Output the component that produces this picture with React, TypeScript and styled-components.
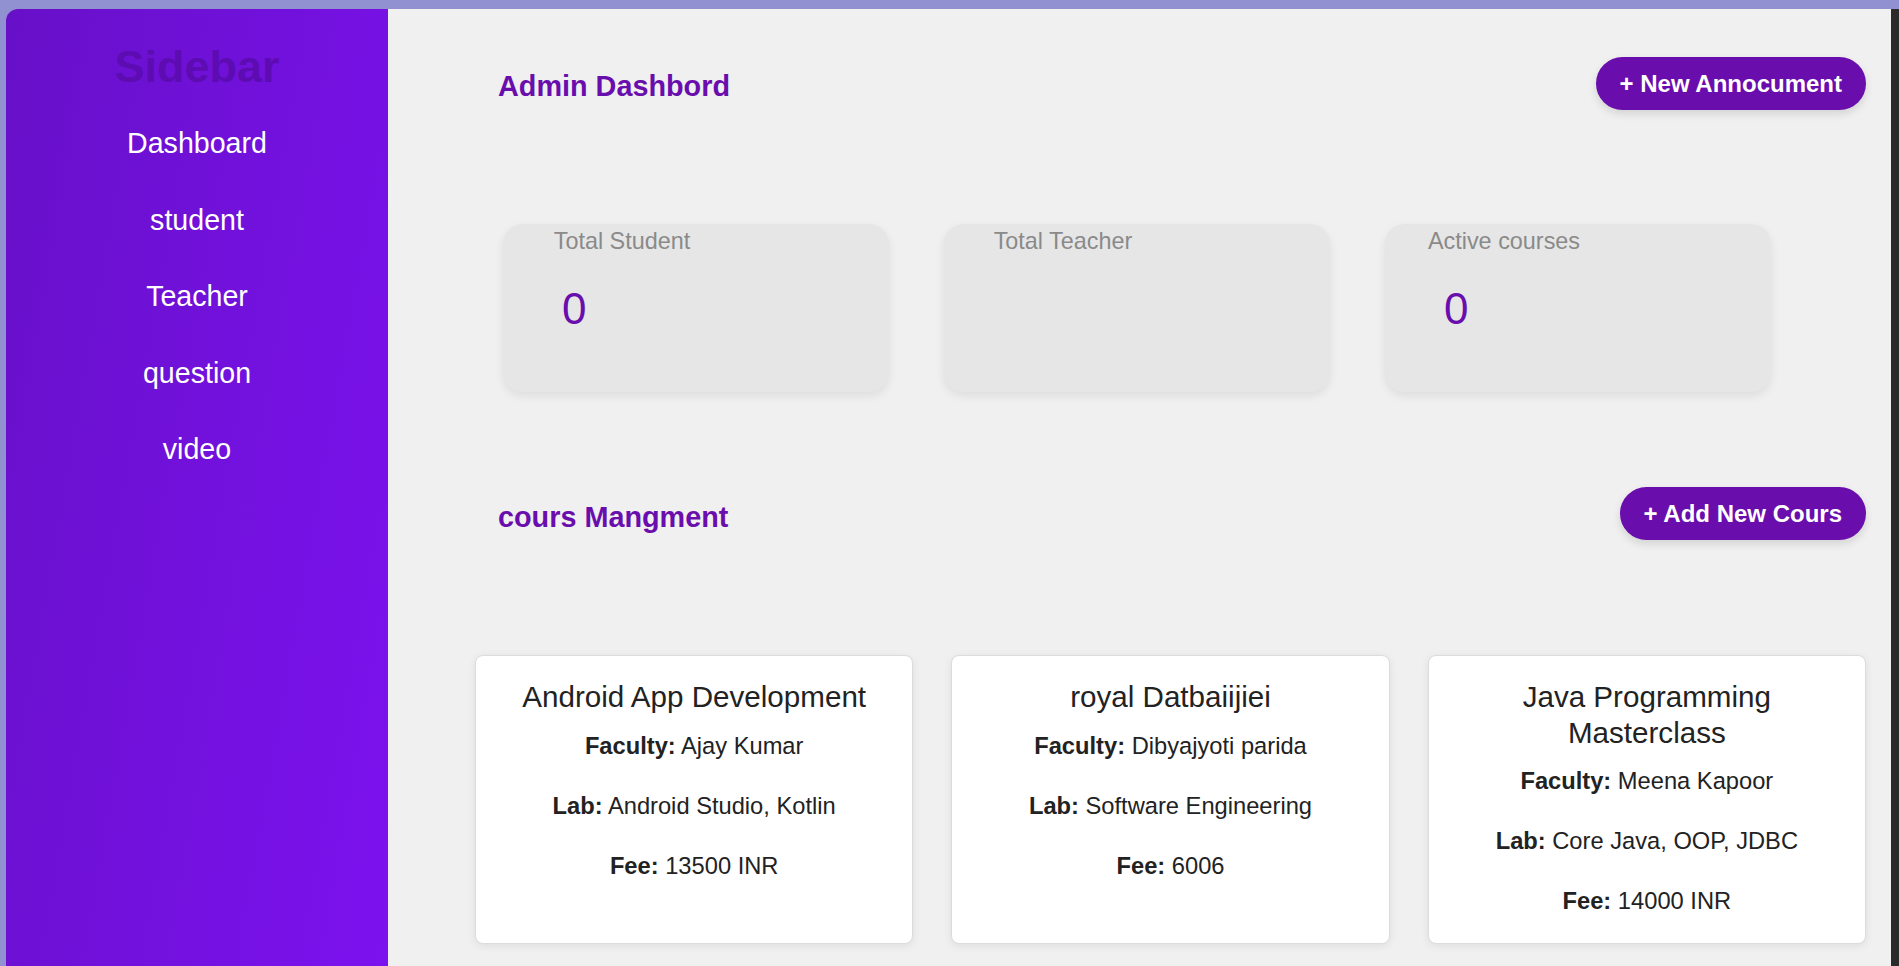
import React from "react";
import styled, { createGlobalStyle } from "styled-components";

const GlobalStyle = createGlobalStyle`
  html, body {
    margin: 0;
    padding: 0;
    background: #9191d1;
    font-family: "Liberation Sans", Arial, sans-serif;
  }
  * { box-sizing: border-box; }
`;

const Page = styled.div`
  display: flex;
  min-height: 966px;
  height: 966px;
  padding: 9px 0 0 6px;
  overflow: hidden;
`;

const Shell = styled.div`
  flex: 1;
  display: flex;
  border-top-left-radius: 12px;
  overflow: hidden;
`;

const Sidebar = styled.aside`
  width: 382px;
  flex-shrink: 0;
  background: linear-gradient(100deg, #6710c8 0%, #7c12ef 100%);
  padding-top: 32px;
  text-align: center;
`;

const SidebarTitle = styled.h1`
  margin: 0 0 12px;
  font-size: 45px;
  line-height: 52px;
  font-weight: 700;
  color: #5d0cb2;
`;

const NavList = styled.nav`
  display: flex;
  flex-direction: column;
`;

const NavItem = styled.a`
  display: block;
  font-size: 28.6px;
  line-height: 76.6px;
  color: #ffffff;
  text-decoration: none;
`;

const Main = styled.main`
  flex: 1;
  background: #f0f0f0;
  padding: 0 25px 0 87px;
`;

const HeaderRow = styled.div<{ $top: number }>`
  display: flex;
  justify-content: space-between;
  align-items: flex-start;
  margin-top: ${(p) => p.$top}px;
`;

const SectionTitle = styled.h2<{ $offset: number }>`
  margin: ${(p) => p.$offset}px 0 0 23px;
  font-size: 28.8px;
  line-height: 33px;
  font-weight: 700;
  color: #6a0dad;
`;

const PillButton = styled.button`
  height: 53px;
  padding: 0 24px;
  border: none;
  border-radius: 27px;
  background: #6a0dad;
  color: #ffffff;
  font-family: "Liberation Sans", Arial, sans-serif;
  font-size: 24px;
  font-weight: 700;
  line-height: 53px;
  box-shadow: 0 4px 8px rgba(0, 0, 0, 0.12);
  cursor: pointer;
  white-space: nowrap;
`;

const StatsRow = styled.div`
  display: flex;
  gap: 55px;
  margin: 114px 0 0 28px;
`;

const StatCard = styled.div`
  width: 386px;
  height: 168px;
  border-radius: 20px;
  background: #e6e6e6;
  box-shadow: 0 4px 10px rgba(0, 0, 0, 0.08);
  padding-top: 4px;
  display: flex;
  flex-direction: column;
`;

const StatLabel = styled.div`
  width: 238px;
  text-align: center;
  font-size: 23.4px;
  line-height: 27px;
  color: #8a8a8a;
`;

const StatValue = styled.div`
  margin: 28px 0 0 59px;
  font-size: 44px;
  line-height: 51px;
  color: #6a0dad;
`;

const CourseGrid = styled.div`
  display: grid;
  grid-template-columns: repeat(3, 1fr);
  gap: 38px;
  margin-top: 115px;
`;

const CourseCard = styled.div`
  background: #ffffff;
  border: 1px solid #dcdcdc;
  border-radius: 8px;
  box-shadow: 0 2px 8px rgba(0, 0, 0, 0.08);
  padding: 23px 20px 28px;
  text-align: center;
  color: #222222;
  min-height: 289px;
`;

const CourseTitle = styled.h3`
  margin: 0 0 17px;
  font-size: 29.6px;
  line-height: 35.6px;
  font-weight: 400;
  color: #222222;
`;

const CourseLine = styled.p`
  margin: 0;
  font-size: 23.7px;
  line-height: 28px;
  & + & {
    margin-top: 32px;
  }
  strong {
    font-weight: 700;
  }
`;

const RightStrip = styled.div`
  width: 8px;
  flex-shrink: 0;
  background: #2b2b2b;
`;

const navItems = ["Dashboard", "student", "Teacher", "question", "video"];

const stats = [
  { label: "Total Student", value: "0" },
  { label: "Total Teacher", value: "" },
  { label: "Active courses", value: "0" },
];

const courses = [
  { title: "Android App Development", faculty: "Ajay Kumar", lab: "Android Studio, Kotlin", fee: "13500 INR" },
  { title: "royal Datbaiijiei", faculty: "Dibyajyoti parida", lab: "Software Engineering", fee: "6006" },
  { title: "Java Programming Masterclass", faculty: "Meena Kapoor", lab: "Core Java, OOP, JDBC", fee: "14000 INR" },
];

export default function App() {
  return (
    <>
      <GlobalStyle />
      <Page>
        <Shell>
          <Sidebar>
            <SidebarTitle>Sidebar</SidebarTitle>
            <NavList>
              {navItems.map((n) => (
                <NavItem key={n}>{n}</NavItem>
              ))}
            </NavList>
          </Sidebar>
          <Main>
            <HeaderRow $top={48}>
              <SectionTitle $offset={13}>Admin Dashbord</SectionTitle>
              <PillButton>+ New Annocument</PillButton>
            </HeaderRow>
            <StatsRow>
              {stats.map((s) => (
                <StatCard key={s.label}>
                  <StatLabel>{s.label}</StatLabel>
                  <StatValue>{s.value}</StatValue>
                </StatCard>
              ))}
            </StatsRow>
            <HeaderRow $top={95}>
              <SectionTitle $offset={14}>cours Mangment</SectionTitle>
              <PillButton>+ Add New Cours</PillButton>
            </HeaderRow>
            <CourseGrid>
              {courses.map((c) => (
                <CourseCard key={c.title}>
                  <CourseTitle>{c.title}</CourseTitle>
                  <CourseLine>
                    <strong>Faculty:</strong> {c.faculty}
                  </CourseLine>
                  <CourseLine>
                    <strong>Lab:</strong> {c.lab}
                  </CourseLine>
                  <CourseLine>
                    <strong>Fee:</strong> {c.fee}
                  </CourseLine>
                </CourseCard>
              ))}
            </CourseGrid>
          </Main>
        </Shell>
        <RightStrip />
      </Page>
    </>
  );
}
